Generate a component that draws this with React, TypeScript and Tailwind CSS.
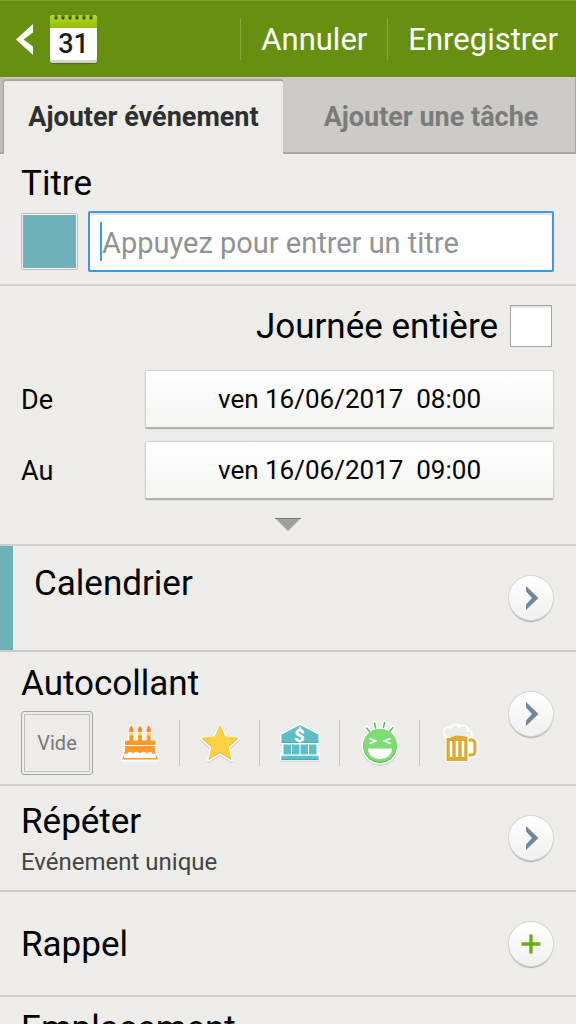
import { useState, type ReactNode } from "react";

// Round white button at the end of each row
function RoundButton({ label, className = "", children }: { label: string; className?: string; children: ReactNode }) {
  return (
    <button
      type="button"
      aria-label={label}
      className={`flex size-11 shrink-0 items-center justify-center rounded-full bg-linear-to-b from-white to-[#f0f0f0] shadow-[0_0_0_1px_#d3d3d1,0_2px_1px_#a9a9a7] ${className}`}
    >
      {children}
    </button>
  );
}

function ChevronIcon() {
  return (
    <svg width="16" height="26" viewBox="-2 0 16 26">
      <path d="M1 1 L13.500 13 L1 25 V19.500 L7 13 L1 6.500Z" fill="#7189a0" />
    </svg>
  );
}

function PlusIcon() {
  return (
    <svg width="20" height="20" viewBox="0 0 20 20">
      <path d="M8.300 .5h3.400v7.800h7.800v3.400h-7.800v7.800H8.300v-7.800H.5V8.300h7.800z" fill="#68b012" />
    </svg>
  );
}

function CalendarIcon() {
  return (
    <div className="flex h-12 w-[47px] flex-col overflow-hidden rounded-[3px] bg-white shadow-[inset_0_-3px_0_#d3d3d3,0_1px_1px_#4d6c0d]">
      <svg viewBox="0 0 47 13" className="h-[13px] w-full shrink-0">
        <defs>
          <linearGradient id="cal" x1="0" y1="0" x2="0" y2="1">
            <stop offset="0" stopColor="#b4d81e" />
            <stop offset="1" stopColor="#93bd0c" />
          </linearGradient>
        </defs>
        <rect width="47" height="13" fill="url(#cal)" />
        {[6, 13, 20, 27, 34, 41].map((x) => (
          <g key={x}>
            <rect x={x - 1.5} y="0" width="3" height="4.500" rx="1" fill="#3c4a22" />
            <rect x={x - 0.5} y="0" width="1" height="2" fill="#9aa87a" />
          </g>
        ))}
      </svg>
      <span className="text-center text-[27px] leading-8 font-medium text-[#1d1d1d]">31</span>
    </div>
  );
}

function CakeIcon() {
  return (
    <svg width="44" height="44" viewBox="0 0 44 44">
      <g stroke="#fff" strokeWidth="3" strokeLinejoin="round" fill="#fff">
        <path d="M11.500 12v9H7v8l-3 8v2h36v-2l-3-8v-8h-4.500v-9l-1.500-5-2 5v9h-5v-9l-2-6-2 6v9h-5v-9l-2-5z" />
      </g>
      <g fill="#f9992a">
        {[13.300, 22, 30.700].map((x) => (
          <g key={x}>
            <path d={`M${x} 4.500c3 4 3 7 0 7s-3-3 0-7z`} fill="#f58a20" />
            <rect x={x - 2} y="12.500" width="4" height="8" />
            <rect x={x - 2} y="12.500" width="4" height="2" fill="#ffd36a" />
          </g>
        ))}
        <rect x="7" y="19.500" width="30" height="4.500" rx="1" />
        <path d="M7 25h30v5.500l3 8H4l3-8z" />
      </g>
      <path d="M6 37c-1-3 1-5 3-4 1-3 5-3 6 0 1-3 5-3 7-.5 2-2.500 6-2.500 7 .5 1-3 5-3 6 0 2-1 4 1 3 4z" fill="#fff" />
    </svg>
  );
}

function StarIcon() {
  const points = "22,4 27.200,16.200 40.500,17.400 30.500,26.200 33.500,39 22,32.200 10.500,39 13.500,26.200 3.500,17.400 16.800,16.200";
  return (
    <svg width="44" height="44" viewBox="0 0 44 44">
      <polygon points={points} transform="translate(0 1.500)" fill="#d5d5d2" stroke="#d5d5d2" strokeWidth="3" strokeLinejoin="round" />
      <polygon points={points} fill="#fff" stroke="#fff" strokeWidth="3" strokeLinejoin="round" />
      <polygon points={points} fill="#e3b536" />
      <polygon points={points} transform="translate(0 -1)" fill="#ffd046" />
    </svg>
  );
}

function BankIcon() {
  return (
    <svg width="44" height="44" viewBox="0 0 44 44">
      <path d="M22 4 41 13.500v9h-2v10h2v6H3v-6h2v-10H3v-9z" transform="translate(0 1)" fill="#d0d2d0" stroke="#d0d2d0" strokeWidth="2" />
      <path d="M22 4 41 13.500v9h-2v10h2v6H3v-6h2v-10H3v-9z" fill="#fff" stroke="#fff" strokeWidth="2" />
      <g fill="#5fbec5">
        <path d="M22 4 40.500 13.500V22h-37v-8.500z" />
        {[5.500, 14, 22.500, 31].map((x) => (
          <rect key={x} x={x} y="23.500" width="7.500" height="10" />
        ))}
        <rect x="3.500" y="34.700" width="37" height="4.300" />
      </g>
      <path d="M3.500 21.500h37M3.500 38.500h37" stroke="#45aab2" strokeWidth="1" />
      <text x="21.500" y="20.500" textAnchor="middle" fontSize="18" fontWeight="900" fill="#fff">
        $
      </text>
    </svg>
  );
}

function LaughIcon() {
  return (
    <svg width="44" height="48" viewBox="0 0 44 48" fill="none">
      <circle cx="22" cy="28.500" r="18.500" fill="#d3d5d1" />
      <circle cx="22" cy="27" r="18.500" fill="#fff" />
      <g strokeLinecap="round">
        <path d="m8.500 9 3 3.500M16.500 4l1 5M26.500 3.500l-1 5M35 8.500l-3 3.500" stroke="#fff" strokeWidth="4.500" />
        <path d="m8.500 9 3 3.500M16.500 4l1 5M26.500 3.500l-1 5M35 8.500l-3 3.500" stroke="#57b956" strokeWidth="1.500" />
      </g>
      <circle cx="22" cy="27" r="17" fill="#62c35a" />
      <circle cx="22" cy="26.200" r="16.500" fill="#7edc72" />
      <path d="m11.500 19.500 6 2.500-6 2.500M32.500 19.500l-6 2.500 6 2.500" stroke="#fff" strokeWidth="1.800" />
      <path d="M10 29.500h24c0 14-24 14-24 0z" fill="#fff" />
    </svg>
  );
}

function BeerIcon() {
  return (
    <svg width="44" height="44" viewBox="0 0 44 44">
      <path d="M8.500 15h21v2h4c4 0 6 2 6 5v8c0 4-2 6-6 6h-3v3.500h-22z" fill="#fff" stroke="#fff" strokeWidth="2" strokeLinejoin="round" />
      <g fill="#ececea" stroke="#fff" strokeWidth="1.500">
        <circle cx="10.500" cy="11" r="5" />
        <circle cx="17.500" cy="9" r="5.500" />
        <circle cx="25" cy="10" r="5.500" />
        <circle cx="30.500" cy="13" r="3.500" />
      </g>
      <path d="M8 10.500 17 6l8 2.500 6.500 4.500-1 3h-21z" fill="#ececea" />
      <path d="M8.500 17c4 1 7-3 11-2.500 4 0 6 1 10 1.500v24h-21z" fill="#dcaa37" />
      <path d="M30.500 19h3c2.500 0 3.500 1.500 3.500 4v7c0 2.500-1 4-3.500 4h-3" fill="none" stroke="#dcaa37" strokeWidth="3" />
      <path d="M13 20v16M19 20v16M25 20v16" stroke="#fff" strokeWidth="2.500" />
    </svg>
  );
}

const stickers = [
  { name: "Gâteau", icon: <CakeIcon /> },
  { name: "Étoile", icon: <StarIcon /> },
  { name: "Banque", icon: <BankIcon /> },
  { name: "Rire", icon: <LaughIcon /> },
  { name: "Bière", icon: <BeerIcon /> },
];

const dates = [
  { id: "from", label: "De", value: "ven 16/06/2017  08:00" },
  { id: "to", label: "Au", value: "ven 16/06/2017  09:00" },
];

export default function App() {
  const [title, setTitle] = useState("");
  const [allDay, setAllDay] = useState(false);

  return (
    <div className="flex h-screen flex-col overflow-hidden bg-[#edece8] font-[Roboto,'Noto_Sans',sans-serif] text-black">
      {/* Action bar */}
      <header className="flex h-[77px] shrink-0 items-center border-t border-[#7da035] bg-[#679010] text-white">
        <a href="#" aria-label="Retour" className="flex items-center gap-4 pl-4">
          <svg width="18" height="31" viewBox="0 0 18 31">
            <path d="M17 0v8.500L7.500 15.500 17 22.500V31L0 15.500z" fill="#fff" />
          </svg>
          <CalendarIcon />
        </a>
        <div className="ml-auto flex h-[42px] text-[31px] leading-[44px] [text-shadow:0_1px_1px_#3f5c05]">
          <button type="button" className="border-l border-[#86a740] px-5">
            Annuler
          </button>
          <button type="button" className="border-l border-[#86a740] pr-[18px] pl-5">
            Enregistrer
          </button>
        </div>
      </header>

      {/* Tabs */}
      <div role="tablist" className="flex h-[77px] shrink-0 bg-[#cccbc7] text-[27px] leading-8 font-bold">
        <div className="w-1 border-b-2 border-[#a9a8a5] bg-[#bdbcb9]" />
        <button
          type="button"
          role="tab"
          aria-selected="true"
          className="mt-1 w-[279px] rounded-t-xs bg-[#edece8] pb-0.5 text-[#2f2f2f] shadow-[0_-1px_1px_1px_#a3a29f]"
        >
          Ajouter événement
        </button>
        <button
          type="button"
          role="tab"
          aria-selected="false"
          className="relative flex-1 border-r border-b-2 border-[#a9a8a5] bg-[#cccbc7] pt-1 pl-1 text-[#7b7b79]"
        >
          Ajouter une tâche
        </button>
      </div>

      <main className="relative min-h-0 flex-1 overflow-y-auto bg-[#edece8] [scrollbar-width:none]">
        {/* Titre */}
        <section className="border-b-2 border-[#d2d1cd] pt-[10px] pr-[22px] pb-3 pl-[21px]">
          <label htmlFor="title" className="block text-[35px] leading-10">
            Titre
          </label>
          <div className="mt-[7px] flex items-center gap-[10px]">
            <button
              type="button"
              aria-label="Couleur"
              className="size-[57px] shrink-0 rounded-xs border border-[#bcbcba] bg-[#f4f4f2] p-px"
            >
              <span className="block size-full bg-[#6eb1b9]" />
            </button>
            <div className="relative flex min-w-0 flex-1">
              <input
                id="title"
                value={title}
                onChange={(e) => setTitle(e.target.value)}
                placeholder="Appuyez pour entrer un titre"
                className="h-[61px] w-full rounded-xs border-2 border-[#3f97dc] bg-white px-3 pt-0.5 text-[29px] shadow-[inset_0_2px_1px_#e2e2e2] outline-none placeholder:text-[#929292]"
              />
              {title === "" && <span className="absolute top-[11px] left-3 h-[39px] w-0.5 bg-[#33a0f0]" />}
            </div>
          </div>
        </section>

        {/* Dates */}
        <section className="border-b-2 border-[#d2d1cd] pt-[19px] pr-[22px] pb-[13px] pl-[21px]">
          <div className="flex h-[42px] items-center justify-end gap-3">
            <label htmlFor="all-day" className="pt-0.5 text-[35px] leading-10">
              Journée entière
            </label>
            <input
              id="all-day"
              type="checkbox"
              checked={allDay}
              onChange={(e) => setAllDay(e.target.checked)}
              className="mr-0.5 size-[42px] appearance-none border border-[#a5a5a3] bg-white shadow-[inset_0_2px_1px_#e8e8e8] checked:bg-[#68b012]"
            />
          </div>
          <div className="mt-[23px] flex flex-col gap-[13px]">
            {dates.map((d) => (
              <div key={d.id} className="flex items-center">
                <label htmlFor={d.id} className="w-[124px] shrink-0 pt-0.5 text-[27px]">
                  {d.label}
                </label>
                <button
                  id={d.id}
                  type="button"
                  className="h-[58px] flex-1 rounded-xs border border-[#d2d2d0] border-b-[#b5b5b3] bg-linear-to-b from-white to-[#f4f4f3] text-[26px] whitespace-pre shadow-[0_1px_1px_#a6a6a4]"
                >
                  {d.value}
                </button>
              </div>
            ))}
          </div>
          <button type="button" aria-label="Plus d'options" className="mx-auto mt-[19px] block">
            <svg width="26" height="13" viewBox="0 0 26 13">
              <path d="M0 0h26L13 13z" fill="#9f9f9c" />
              <path d="M0 .5h26" stroke="#757573" />
            </svg>
          </button>
        </section>

        {/* Calendrier */}
        <section className="flex h-[106px] border-b-2 border-[#cbcac7] pr-[23px]">
          <div className="w-[13px] bg-[#6eb1b9]" />
          <h2 className="flex-1 pt-[18px] pl-[21px] text-[35px] leading-10">Calendrier</h2>
          <RoundButton label="Choisir le calendrier" className="self-center">
            <ChevronIcon />
          </RoundButton>
        </section>

        {/* Autocollant */}
        <section className="flex items-start border-b-2 border-[#d2d1cd] pt-3 pr-[23px] pb-[9px] pl-[21px]">
          <div className="flex-1">
            <h2 className="text-[35px] leading-10">Autocollant</h2>
            <div className="mt-[7px] flex items-center">
              <button
                type="button"
                className="mr-[7px] h-16 w-[72px] shrink-0 rounded-[3px] border border-[#a2a4a5] p-0.5 text-xl text-[#777]"
              >
                <span className="flex size-full items-center justify-center border border-[#bfc0c0]">Vide</span>
              </button>
              <div className="flex divide-x divide-[#c3c2bf]">
                {stickers.map((s) => (
                  <button key={s.name} type="button" aria-label={s.name} className="flex h-[46px] w-20 items-center justify-center">
                    {s.icon}
                  </button>
                ))}
              </div>
            </div>
          </div>
          <RoundButton label="Choisir un autocollant" className="mt-7">
            <ChevronIcon />
          </RoundButton>
        </section>

        {/* Répéter */}
        <section className="flex h-[106px] items-center border-b-2 border-[#cbcac7] pr-[23px] pl-[21px]">
          <div className="flex-1 pt-1">
            <h2 className="text-[35px] leading-10">Répéter</h2>
            <p className="pt-1 text-2xl leading-8 text-[#444]">Evénement unique</p>
          </div>
          <RoundButton label="Choisir la répétition">
            <ChevronIcon />
          </RoundButton>
        </section>

        {/* Rappel */}
        <section className="flex h-[105px] items-center border-b-2 border-[#d2d1cd] pr-[23px] pl-[21px]">
          <h2 className="flex-1 pt-0.5 text-[35px] leading-10">Rappel</h2>
          <RoundButton label="Ajouter un rappel">
            <PlusIcon />
          </RoundButton>
        </section>

        {/* Emplacement */}
        <section className="px-[21px] pt-3 pb-6">
          <h2 className="text-[35px] leading-10">Emplacement</h2>
        </section>
      </main>
    </div>
  );
}
